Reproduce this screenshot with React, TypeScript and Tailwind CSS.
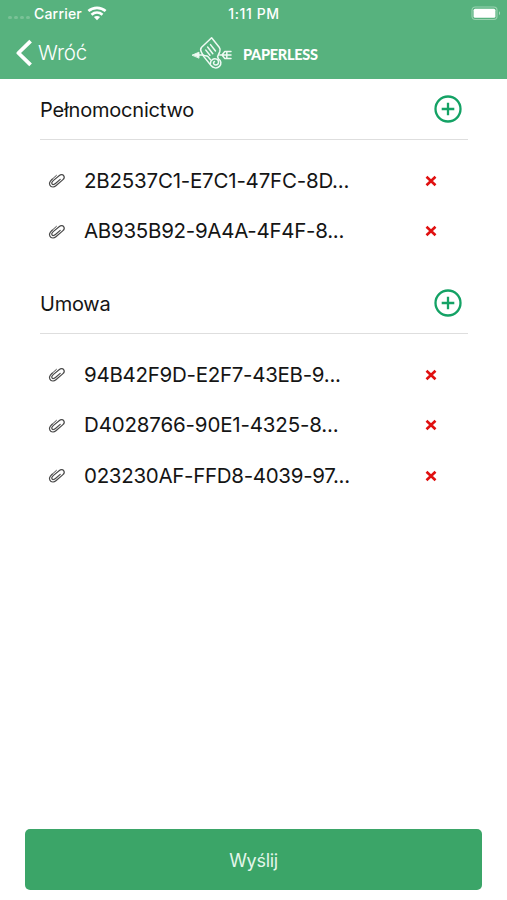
import React from "react";

type FileItem = { name: string; spacing: string };
type Group = { title: string; spacing: string; files: FileItem[] };

const groups: Group[] = [
  {
    title: "Pełnomocnictwo",
    spacing: "tracking-[-0.2px]",
    files: [
      { name: "2B2537C1-E7C1-47FC-8D...", spacing: "tracking-[-0.21px]" },
      { name: "AB935B92-9A4A-4F4F-8...", spacing: "tracking-[-0.28px]" },
    ],
  },
  {
    title: "Umowa",
    spacing: "tracking-[-0.25px]",
    files: [
      { name: "94B42F9D-E2F7-43EB-9...", spacing: "tracking-[-0.28px]" },
      { name: "D4028766-90E1-4325-8...", spacing: "tracking-[-0.16px]" },
      { name: "023230AF-FFD8-4039-97...", spacing: "tracking-[-0.3px]" },
    ],
  },
];

function Wifi() {
  return (
    <svg width="20" height="15" viewBox="0 0 20 15" fill="none" stroke="white" strokeWidth="2.7">
      <path d="M1.4 5C6.3.7 13.7.7 18.6 5" />
      <path d="M4.5 8.7C7.8 5.9 12.2 5.9 15.5 8.7" />
      <path d="M6.9 11.1C8.8 9.6 11.2 9.6 13.1 11.1L10 14.2Z" fill="white" stroke="none" />
    </svg>
  );
}

function Battery() {
  return (
    <svg width="31" height="15" viewBox="0 0 31 15" fill="none">
      <rect x="1" y="1" width="25" height="12.5" rx="3.2" stroke="#9ad2b1" strokeWidth="1.1" />
      <rect x="2.6" y="2.8" width="21.8" height="9" rx="1.5" fill="white" />
      <path d="M28 5.3c1.4.6 1.4 3.3 0 3.9z" fill="#a9d9bd" />
    </svg>
  );
}

function Logo() {
  return (
    <svg width="42" height="34" viewBox="0 0 42 34" fill="none" stroke="#effaf3" strokeWidth="1.5" strokeLinecap="round" strokeLinejoin="round">
      <path d="M1.4 19 8 16.2V21.8Z" fill="#effaf3" strokeWidth=".9" />
      <path d="M7 19h4.5" />
      <path d="M20.6 1.8 10.6 11.2C9.2 12.7 9.5 14.6 10.5 16.4L12.8 20.6 19.8 29.3C22 32.3 26 32.8 28.4 30.4 30.7 28 30.3 24.4 27.4 22.9L26.6 20.6 28.8 15.6C29.4 14 29.2 12.6 28.2 11.3Z" />
      <path d="M11.6 18.8C13.2 20.6 15.4 19 17.1 20.7L19.4 23.6" />
      <path d="M19.5 27.4C19.2 24.2 22.6 21.9 25.6 23.1 28.7 24.6 27.9 28.9 24.8 29 22.4 29 21.7 26.4 23.5 25.5" />
      <path d="m14.8 14.1 4.1 5.2M16.6 11l5.2 6.7M19.5 8.6l5 6.4" strokeWidth="1.5" />
      <path d="M28.8 19H40M31 19l2.8-3.4H40M31 19l2.8 3.4H40M35.8 15.6v6.8" strokeWidth="1.5" />
    </svg>
  );
}

function PlusCircle() {
  return (
    <svg width="28" height="28" viewBox="0 0 28 28" fill="none" stroke="#14a265">
      <circle cx="14" cy="14" r="12.5" strokeWidth="2.3" />
      <path d="M14 7.7v12.6M7.7 14h12.6" strokeWidth="2.3" />
    </svg>
  );
}

function Clip() {
  return (
    <svg width="18" height="16" viewBox="0 0 18 16" fill="none" stroke="#484848" strokeWidth="1.2" strokeLinecap="round" strokeLinejoin="round">
      <path d="M4.2 6.2 2.4 8.2C.3 10.8 2 14.1 5 14c1.2 0 2-.5 2.9-1.3l6.8-5.8c1.6-1.4 2-2.8 1.1-4.1-1-1.4-3-1.5-4.7-.1L5.5 7.4C3.7 9 3.4 10 4 10.9c.8 1 2.1.8 3.5-.4l4.7-4.1" />
      <path d="M8.4 2.4 3.9 6.5" strokeWidth="1" />
    </svg>
  );
}

function Cross() {
  return (
    <svg width="12" height="12" viewBox="0 0 12 12" fill="none" stroke="#e01010" strokeWidth="2.6">
      <path d="m1.5 1.7 9 8.6M10.5 1.7l-9 8.6" />
    </svg>
  );
}

export default function App() {
  return (
    <div className="flex h-[900px] w-[507px] flex-col bg-white font-['Inter',sans-serif] text-[#151515]">
      <header className="h-[79px] shrink-0 bg-[#57b27e] text-white">
        <div className="grid h-[26px] grid-cols-3 items-center pl-2 pr-[5px]">
          <div className="flex items-center">
            <div className="flex w-[26px] gap-[2px] pt-2">
              {[0, 1, 2, 3].map((dot) => (
                <span key={dot} className="h-[3px] w-[4px] rounded-full bg-[#7ac297]" />
              ))}
            </div>
            <span className="mr-[5px] text-[14px] font-medium tracking-[0.2px]">Carrier</span>
            <Wifi />
          </div>
          <span className="pr-[2px] text-center text-[14px] font-medium tracking-[0.6px]">1:11 PM</span>
          <div className="flex justify-end">
            <Battery />
          </div>
        </div>
        <div className="flex h-[53px] items-center">
          <button className="flex w-[191px] items-center pl-4">
            <svg width="17" height="28" viewBox="0 0 17 28" fill="none" stroke="white" strokeWidth="3.8" strokeLinejoin="round">
              <path d="M14.6 2.2 2.4 14l12.2 11.8" />
            </svg>
            <span className="ml-[5px] mt-px text-[20.5px] font-light tracking-[-0.2px]">Wróć</span>
          </button>
          <Logo />
          <span className="ml-[10px] mt-[4px] font-['Lato',sans-serif] text-[14.5px] font-black tracking-[-0.27px]">PAPERLESS</span>
        </div>
      </header>

      <main className="flex-1 pl-10 pr-[39px]">
        {groups.map((group) => (
          <section key={group.title} className="pb-4">
            <div className="flex h-[61px] items-center justify-between border-b border-[#dedede] pr-[6.5px]">
              <h2 className={`pt-[2.5px] text-[20px] ${group.spacing}`}>{group.title}</h2>
              <button aria-label="Dodaj">
                <PlusCircle />
              </button>
            </div>
            <ul className="pt-4">
              {group.files.map((file) => (
                <li key={file.name} className="flex h-[50.5px] items-center pl-2 pr-[31.5px]">
                  <Clip />
                  <span className={`ml-[18px] flex-1 whitespace-nowrap text-[20.5px] ${file.spacing}`}>{file.name}</span>
                  <button aria-label="Usuń" className="-mt-[1.5px]">
                    <Cross />
                  </button>
                </li>
              ))}
            </ul>
          </section>
        ))}
      </main>

      <footer className="px-[25px] pb-[10px]">
        <button className="flex h-[61px] w-full items-center justify-center rounded-[5px] bg-[#3ba568] pt-px text-[18px] tracking-[-0.3px] text-[#e4f6eb]">
          Wyślij
        </button>
      </footer>
    </div>
  );
}
